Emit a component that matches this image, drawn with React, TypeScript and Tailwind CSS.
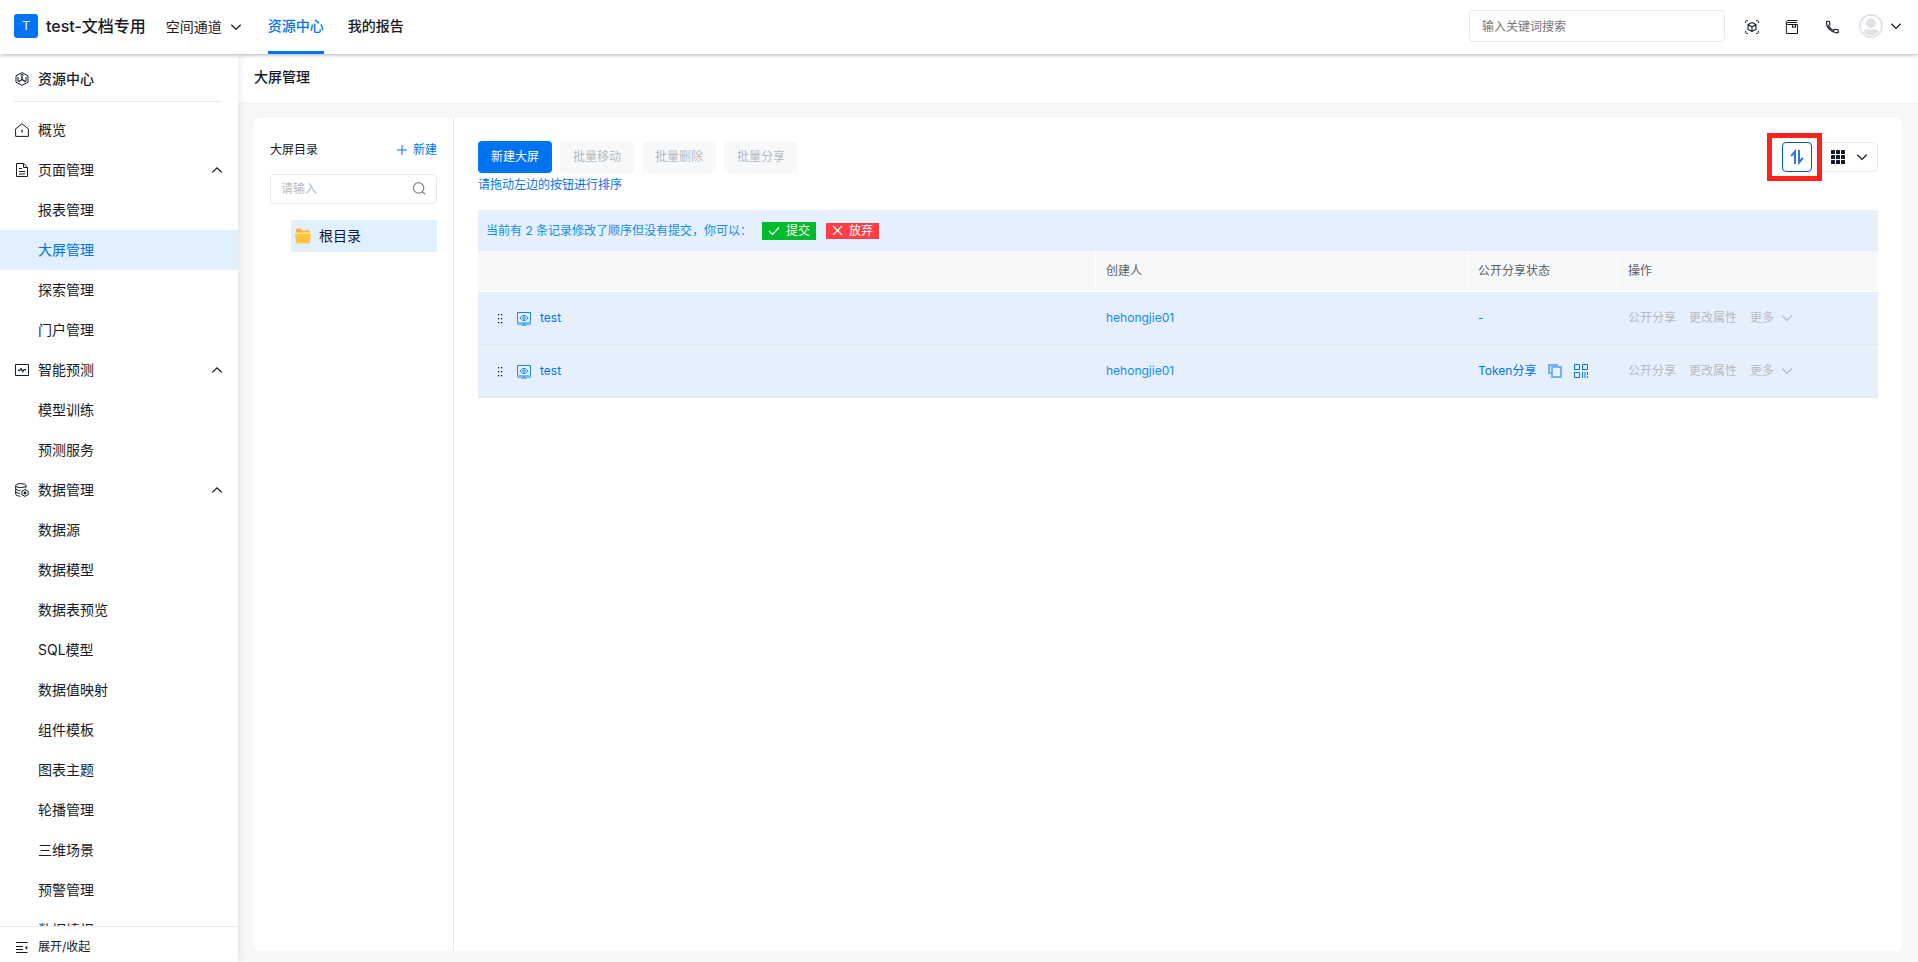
import React, { useState } from 'react';

interface MenuGroup {
  title: string;
  icon: React.ReactNode;
  children: string[];
}

interface ScreenRow {
  id: number;
  name: string;
  creator: string;
  share: string | null;
}

/* ---------- Icons ---------- */

const svgProps = {
  width: 14,
  height: 14,
  viewBox: '0 0 14 14',
  fill: 'none',
  stroke: 'currentColor',
  strokeWidth: 1,
  'aria-hidden': true,
};

const ChevronIcon = ({ up = false }: { up?: boolean }) => (
  <svg {...svgProps} width={12} height={12} viewBox="0 0 12 12" strokeWidth={1.3} className="shrink-0">
    <path d={up ? 'M1.3 8.4 6 3.8l4.7 4.6' : 'M1.3 3.8 6 8.4l4.7-4.6'} />
  </svg>
);

const ResourceIcon = () => (
  <svg {...svgProps} className="shrink-0">
    <path d="M7 .6 13 3.8v6.4L7 13.4 1 10.2V3.8z" />
    <path d="M5.3 3.3 7 2.4l1.7.9M3 5v4l1.7 1M11 5v4l-1.7 1" />
    <path d="M7 3.6v3.9M7 7.5l-3.2 2M7 7.5l3.2 2" strokeWidth={1.3} />
  </svg>
);

const HomeIcon = () => (
  <svg {...svgProps} className="shrink-0">
    <path d="M.6 13.4V5.9L7 .8l6.4 5.1v7.5z" strokeLinejoin="round" />
    <path d="M7 6.8v2.6" strokeWidth={1.3} />
  </svg>
);

const PageIcon = () => (
  <svg {...svgProps} className="shrink-0">
    <path d="M1.5.5h7.3l3.7 3.7v9.3h-11zM8.5.7v3.8h3.8" />
    <path d="M4 5.5h3M4 8.500h6M4 11h6" />
  </svg>
);

const PredictIcon = () => (
  <svg {...svgProps} className="shrink-0">
    <path d="M.5 1.5h13v11H.5z" />
    <path d="M3 7.3h1.6L6 5.6l1.8 3L9 6.6h2" strokeWidth={1.2} />
  </svg>
);

const DataIcon = () => (
  <svg {...svgProps} className="shrink-0">
    <ellipse cx="5.8" cy="2.6" rx="5.1" ry="2" />
    <path d="M.7 2.6v8.5c0 1.1 2 2 4.8 2.1M10.9 2.6v2.8M.7 5.7c.2 1 2 1.8 4.8 1.8M.7 8.6c.2 1 1.9 1.7 4.3 1.8" />
    <path d="M10 6.5 13.1 8.2v3.5L10 13.4l-3.1-1.7V8.2z" />
    <circle cx="10" cy="10" r="1.4" fill="currentColor" stroke="none" />
  </svg>
);

const CollapseIcon = () => (
  <svg {...svgProps} className="shrink-0">
    <path d="M1 2.5h11.5M1 6.500h7M1 9.500h7M1 12.500h11.5" />
    <path d="M12.3 5.8v4L9.8 7.800z" fill="currentColor" stroke="none" />
  </svg>
);

const CubeIcon = () => (
  <svg {...svgProps}>
    <path d="M.6 3V1.6Q.6.6 1.6.6H3M11 .6h1.4q1 0 1 1V3M13.4 11v1.4q0 1-1 1H11M3 13.4H1.6q-1 0-1-1V11" />
    <path d="M7 2.5 11 4.6v4.8L7 11.5 3 9.4V4.6zM3 4.7l4 2.1 4-2.1M7 6.8v4.6" strokeWidth={1.1} />
  </svg>
);

const BookIcon = () => (
  <svg {...svgProps}>
    <path d="M12.5.5H2.8C1.8.5 1.4 1.3 1.4 2.2V13.5h11.1V4.5H2.8C.9 4.5 1.1 2.5 3 2.5h9" />
    <path d="M7.5 4.5v3.2M10.5 4.5v3.2M7.5 7h3" strokeWidth={1.1} />
  </svg>
);

const PhoneIcon = () => (
  <svg {...svgProps}>
    <path
      d="M1.6 1.3h2.8c.4 1.2.6 2.2.5 3.3L3.6 5.7c1 2.2 2.8 4 4.9 4.9l1.2-1.4c1.2 0 2.3.2 3.5.6v2.9c-6.2 1-12.5-5.2-11.6-11.4z"
      strokeWidth={1.1}
      strokeLinejoin="round"
    />
  </svg>
);

const SearchIcon = () => (
  <svg {...svgProps} strokeWidth={1.2}>
    <circle cx="6.6" cy="5.900" r="5.2" />
    <path d="m10.300 9.700 2.900 2.600" />
  </svg>
);

const AvatarIcon = () => (
  <svg width="24" height="24" viewBox="0 0 24 24" aria-hidden>
    <circle cx="12" cy="12" r="11.1" fill="#fff" stroke="#e0e2e7" strokeWidth="1.8" />
    <circle cx="12" cy="9.2" r="5" fill="#e0e2e7" />
    <path d="M4.500 17.500c1.500-2 3.200-2.600 4.800-2.600 1.600 1.100 3.800 1.100 5.400 0 1.600 0 3.300.6 4.800 2.600-1.700 2.400-4.400 3.700-7.500 3.700s-5.800-1.300-7.500-3.700z" fill="#e0e2e7" />
  </svg>
);

const FolderIcon = () => (
  <svg width="16" height="16" viewBox="0 0 16 16" aria-hidden>
    <path d="M1 1.5Q1 .5 2 .5h3.5L7 2.2h7q1 0 1 1v2.300H1z" fill="#ffbb33" />
    <path d="M0 6h16l-1 8.500q-.1 1-1 1H2q-.9 0-1-1z" fill="#ffc440" />
    <path d="M1 5h14" stroke="#ffe3a3" />
  </svg>
);

const SortIcon = () => (
  <svg width="14" height="16" viewBox="0 0 14 16" fill="none" stroke="currentColor" strokeWidth="2" aria-hidden>
    <path d="M5 15V2.500L1.200 7M9 1v12.500L12.800 9" />
  </svg>
);

const GridIcon = () => (
  <svg width="14" height="14" viewBox="0 0 14 14" fill="currentColor" aria-hidden>
    {[0, 5, 10].map((y) => [0, 5, 10].map((x) => <rect key={`${x}-${y}`} x={x} y={y} width="4" height="4" rx=".5" />))}
  </svg>
);

const DragIcon = () => (
  <svg width="6" height="10" viewBox="0 0 6 10" fill="currentColor" aria-hidden>
    {[0, 4, 8].map((y) => [0, 3].map((x) => <rect key={`${x}-${y}`} x={x} y={y} width="1.3" height="1.3" />))}
  </svg>
);

const ScreenIcon = () => (
  <svg width="14" height="14" viewBox="0 0 14 14" fill="none" aria-hidden>
    <path d="M.5 11V.5h13V11" stroke="#108cee" />
    <path d="M0 10h14v3H10v1H4v-1H0z" fill="#70baf5" />
    <path d="M6 11.500h2v1H6z" fill="#108cee" />
    <path d="M3 6c2-3.3 6-3.3 8 0-2 3.3-6 3.3-8 0z" stroke="#108cee" />
    <circle cx="7" cy="6" r="1.2" stroke="#108cee" />
  </svg>
);

const CopyIcon = () => (
  <svg width="14" height="14" viewBox="0 0 14 14" fill="none" stroke="#73b0f7" strokeWidth="2" aria-hidden>
    <path d="M3 9H1V1h8v2" />
    <path d="M4 3h9v10H4z" />
  </svg>
);

const QrIcon = () => (
  <svg {...svgProps}>
    <path d="M.5.5h5v5h-5zM8.5.5h5v5h-5zM.5 8.5h5v5h-5zM8.5 8v6M11 8v6M13.5 8v3M13.5 12v2" />
  </svg>
);

/* ---------- Data ---------- */

const MENU: MenuGroup[] = [
  { title: '页面管理', icon: <PageIcon />, children: ['报表管理', '大屏管理', '探索管理', '门户管理'] },
  { title: '智能预测', icon: <PredictIcon />, children: ['模型训练', '预测服务'] },
  {
    title: '数据管理',
    icon: <DataIcon />,
    children: ['数据源', '数据模型', '数据表预览', 'SQL模型', '数据值映射', '组件模板', '图表主题', '轮播管理', '三维场景', '预警管理', '数据填报'],
  },
];

const ROWS: ScreenRow[] = [
  { id: 1, name: 'test', creator: 'hehongjie01', share: null },
  { id: 2, name: 'test', creator: 'hehongjie01', share: 'Token分享' },
];

/* ---------- Layout ---------- */

const Header = () => (
  <header className="relative z-20 flex h-[54px] shrink-0 items-center justify-between bg-white pl-3.5 pr-4 shadow-[0_1px_4px_rgba(0,0,0,0.3)]">
    <div className="flex h-full items-center">
      <div className="flex h-full items-center pb-0.5">
        <div className="flex h-6 w-6 items-center justify-center rounded-[3px] bg-[#0073f0] text-xs text-white">T</div>
        <span className="ml-2 text-base font-medium">test-文档专用</span>
      </div>
      <button className="ml-5 flex items-center gap-2 text-sm">
        空间通道
        <ChevronIcon />
      </button>
      <nav className="ml-[26px] flex h-full gap-6 text-sm font-medium">
        <a href="#resource" className="flex h-full items-center border-b-3 border-[#0073f0] text-[#0073f0]">
          资源中心
        </a>
        <a href="#report" className="flex h-full items-center border-b-3 border-transparent">我的报告</a>
      </nav>
    </div>
    <div className="flex h-full items-center pb-0.5">
      <input
        type="text"
        aria-label="搜索"
        placeholder="输入关键词搜索"
        className="mr-5 h-8 w-64 rounded border border-[#e8e9eb] px-3 text-xs outline-none placeholder:text-[#757575]"
      />
      <div className="flex items-center gap-[26px] pt-0.5">
        <button aria-label="三维"><CubeIcon /></button>
        <button aria-label="文档"><BookIcon /></button>
        <button aria-label="电话"><PhoneIcon /></button>
      </div>
      <button aria-label="用户" className="ml-5 flex items-center gap-[7px]">
        <AvatarIcon />
        <ChevronIcon />
      </button>
    </div>
  </header>
);

const Sidebar = ({ active, onSelect }: { active: string; onSelect: (name: string) => void }) => (
  <aside className="relative z-10 flex w-[238px] shrink-0 flex-col bg-white shadow-[2px_0_8px_rgba(0,0,0,0.08)]">
    <div className="min-h-0 flex-1 overflow-hidden">
      <div className="ml-3.5 mr-4 mb-2 flex h-12 items-center gap-[9px] border-b border-[#e8e9eb] pl-px pt-0.5 text-sm font-medium">
        <ResourceIcon />
        资源中心
      </div>
      <a href="#overview" className="flex h-10 items-center gap-[9px] pl-[15px] text-sm">
        <HomeIcon />
        概览
      </a>
      {MENU.map((group) => (
        <div key={group.title}>
          <button className="flex h-10 w-full items-center gap-[9px] px-[15px] text-sm">
            {group.icon}
            <span className="flex-1 text-left">{group.title}</span>
            <ChevronIcon up />
          </button>
          {group.children.map((name) => (
            <a
              key={name}
              href={`#${name}`}
              onClick={() => onSelect(name)}
              className={`flex h-10 items-center pl-[38px] text-sm ${active === name ? 'bg-[#e1f0ff] text-[#0073f0]' : ''}`}
            >
              {name}
            </a>
          ))}
        </div>
      ))}
    </div>
    <button className="flex h-9 shrink-0 items-center gap-[9px] border-t border-[#e8e9eb] pl-[15px] pt-1 text-xs">
      <CollapseIcon />
      展开/收起
    </button>
  </aside>
);

const Directory = () => (
  <section className="w-50 shrink-0 border-r border-[#e8e9eb] px-4 pt-6">
    <div className="flex h-4 items-center justify-between text-xs">
      <span>大屏目录</span>
      <button className="flex items-center gap-1.5 text-[#0073f0]">
        <svg width="10" height="10" viewBox="0 0 10 10" stroke="currentColor" aria-hidden>
          <path d="M5 0v10M0 5h10" />
        </svg>
        新建
      </button>
    </div>
    <label className="mt-4 flex h-[30px] items-center rounded border border-[#e8e9eb] px-2.5 text-[#84868c]">
      <input
        type="text"
        aria-label="目录搜索"
        placeholder="请输入"
        className="min-w-0 flex-1 text-xs outline-none placeholder:text-[#b8babf]"
      />
      <SearchIcon />
    </label>
    <a href="#root-dir" className="ml-[21px] mt-4 flex h-8 items-center gap-2 bg-[#e1f0ff] pl-1 text-sm">
      <FolderIcon />
      根目录
    </a>
  </section>
);

const Toolbar = () => (
  <div className="flex items-center justify-between">
    <div className="flex gap-2">
      <button className="h-8 rounded bg-[#0073f0] px-[13px] text-xs text-white">新建大屏</button>
      {['批量移动', '批量删除', '批量分享'].map((label) => (
        <button key={label} disabled className="h-8 rounded bg-[#f7f8fa] px-[13px] text-xs text-[#b8babf]">
          {label}
        </button>
      ))}
    </div>
    <div className="flex gap-2">
      <div className="relative">
        <button aria-label="排序" className="flex h-[30px] w-[30px] items-center justify-center rounded border border-[#0055cc] text-[#3377d6]">
          <SortIcon />
        </button>
        <span className="pointer-events-none absolute -bottom-[9px] -left-[15px] -right-[10px] -top-[9px] z-10 border-5 border-[#ff221c]" />
      </div>
      <button aria-label="视图" className="flex h-[30px] w-[58px] items-center justify-end gap-[11px] rounded border border-[#e8e9eb] pr-[9px]">
        <GridIcon />
        <ChevronIcon />
      </button>
    </div>
  </div>
);

const ScreenTable = () => (
  <table className="w-full table-fixed border-separate border-spacing-0 text-left text-xs">
    <colgroup>
      <col />
      <col className="w-[372px]" />
      <col className="w-[150px]" />
      <col className="w-[260px]" />
    </colgroup>
    <thead>
      <tr className="h-[41px] text-[#5c5f66]">
        {['', '创建人', '公开分享状态', '操作'].map((title, idx) => (
          <th key={idx} className="border-b border-r border-white bg-[#f7f8fa] px-2.5 font-normal last:border-r-0">
            {title}
          </th>
        ))}
      </tr>
    </thead>
    <tbody>
      {ROWS.map((row) => (
        <tr key={row.id} className="h-[53px] bg-[#e6f0fd] text-[#108cee] [&>td]:border-b [&>td]:border-[#e4e6e9]">
          <td className="pl-5">
            <div className="flex items-center">
              <span className="pt-0.5 text-[#151b26]"><DragIcon /></span>
              <span className="ml-[13px] mr-[9px] pt-0.5"><ScreenIcon /></span>
              <a href="#screen" className="text-[#0073f0]">{row.name}</a>
            </div>
          </td>
          <td className="px-2.5">{row.creator}</td>
          <td className="px-2.5">
            {row.share ? (
              <div className="flex items-center gap-3 text-[#0073f0]">
                <a href="#share">{row.share}</a>
                <button aria-label="复制"><CopyIcon /></button>
                <button aria-label="二维码"><QrIcon /></button>
              </div>
            ) : (
              '-'
            )}
          </td>
          <td className="px-2.5">
            <div className="flex items-center gap-[13px] text-[#b8babf]">
              <button disabled>公开分享</button>
              <button disabled>更改属性</button>
              <button disabled className="flex items-center gap-[7px]">
                更多
                <ChevronIcon />
              </button>
            </div>
          </td>
        </tr>
      ))}
    </tbody>
  </table>
);

const App: React.FC = () => {
  const [active, setActive] = useState('大屏管理');

  return (
    <div className="flex h-screen flex-col overflow-hidden bg-[#f6f7f9] font-[Inter,'Noto_Sans_CJK_SC',sans-serif] text-[#151b26]">
      <Header />
      <div className="flex min-h-0 flex-1">
        <Sidebar active={active} onSelect={setActive} />
        <main className="flex min-w-0 flex-1 flex-col">
          <h1 className="flex h-12 shrink-0 items-center bg-white px-4 pb-0.5 text-sm font-medium">大屏管理</h1>
          <div className="mx-4 mb-[11px] mt-4 flex min-h-0 flex-1 rounded-md bg-white">
            <Directory />
            <section className="min-w-0 flex-1 px-6 pt-[23px]">
              <Toolbar />
              <p className="mt-[3px] text-xs leading-[18px] text-[#0073f0]">请拖动左边的按钮进行排序</p>
              <div className="mt-4 flex h-[41px] items-center bg-[#e6f0fd] pl-2 text-xs text-[#108cee]">
                <span>当前有 2 条记录修改了顺序但没有提交，你可以：</span>
                <button className="ml-2.5 flex h-[18px] items-center gap-1.5 bg-[#00bb2d] px-1.5 text-white">
                  <svg width="12" height="12" viewBox="0 0 12 12" fill="none" stroke="currentColor" strokeWidth="1.2" aria-hidden>
                    <path d="m1 6 3.500 3.500L11 2.500" />
                  </svg>
                  提交
                </button>
                <button className="ml-2.5 flex h-4 items-center gap-1.5 bg-[#ff3e45] px-1.5 text-white">
                  <svg width="11" height="11" viewBox="0 0 11 11" fill="none" stroke="currentColor" strokeWidth="1.2" aria-hidden>
                    <path d="m1 1 9 9M10 1l-9 9" />
                  </svg>
                  放弃
                </button>
              </div>
              <ScreenTable />
            </section>
          </div>
        </main>
      </div>
    </div>
  );
};

export default App;
